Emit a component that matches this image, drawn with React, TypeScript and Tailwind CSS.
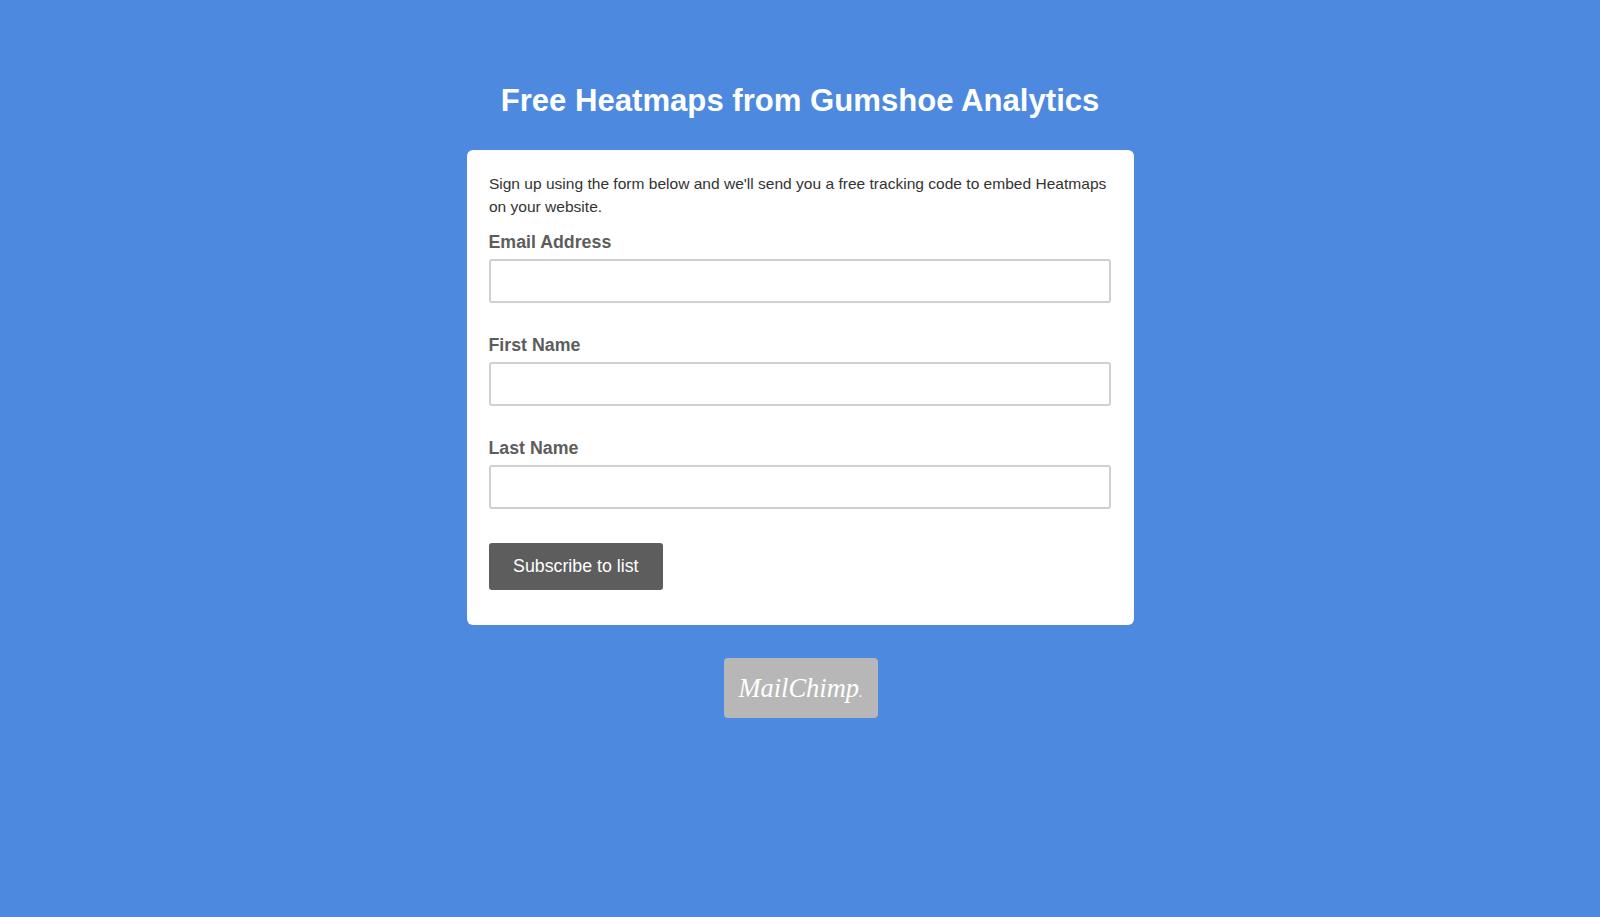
const fields = [
  { id: "email", label: "Email Address", type: "email" },
  { id: "first-name", label: "First Name", type: "text" },
  { id: "last-name", label: "Last Name", type: "text" },
];

function Field({ id, label, type }: { id: string; label: string; type: string }) {
  return (
    <div className="mb-[33px] h-[70.3px]">
      <label htmlFor={id} className="mb-[4px] block h-[26px] text-[17.78px] leading-[26px] font-bold text-[#5d5d5d]">
        {label}
      </label>
      <input
        id={id}
        type={type}
        className="block h-[44px] w-full rounded-[3px] border-2 border-[#d0d0d0] bg-white px-3 outline-none"
      />
    </div>
  );
}

export default function App() {
  return (
    <div className="flex min-h-screen flex-col items-center bg-[#4c89df] pt-[75px] font-['Liberation_Sans',Arial,sans-serif]">
      <h1 className="h-[75px] text-[31.11px] leading-[51px] font-bold whitespace-nowrap text-white">
        Free Heatmaps from Gumshoe Analytics
      </h1>
      <main className="h-[475px] w-[667px] rounded-[6px] bg-white pt-[22px] pr-[23px] pl-[22px]">
        <p className="mb-[10px] ml-[0.4px] w-[622px] text-[15.56px] leading-[23.33px] text-[#333333]">
          Sign up using the form below and we'll send you a free tracking code to embed Heatmaps on your website.
        </p>
        <form className="flex flex-col items-start [&>div]:w-full">
          {fields.map((f) => (
            <Field key={f.id} {...f} />
          ))}
          <button
            type="button"
            className="mt-[4px] h-[47px] w-[174.5px] rounded-[3px] bg-[#5d5d5d] text-[17.78px] whitespace-nowrap text-white"
          >
            Subscribe to list
          </button>
        </form>
      </main>
      <footer className="mt-[33px] ml-[1px] flex h-[60px] w-[154px] items-center justify-center rounded-[4px] bg-[#b7b7b7]">
        <span className="font-['Liberation_Serif',serif] text-[26.5px] leading-none text-white italic">
          MailChimp<span className="text-[14px]">.</span>
        </span>
      </footer>
    </div>
  );
}
